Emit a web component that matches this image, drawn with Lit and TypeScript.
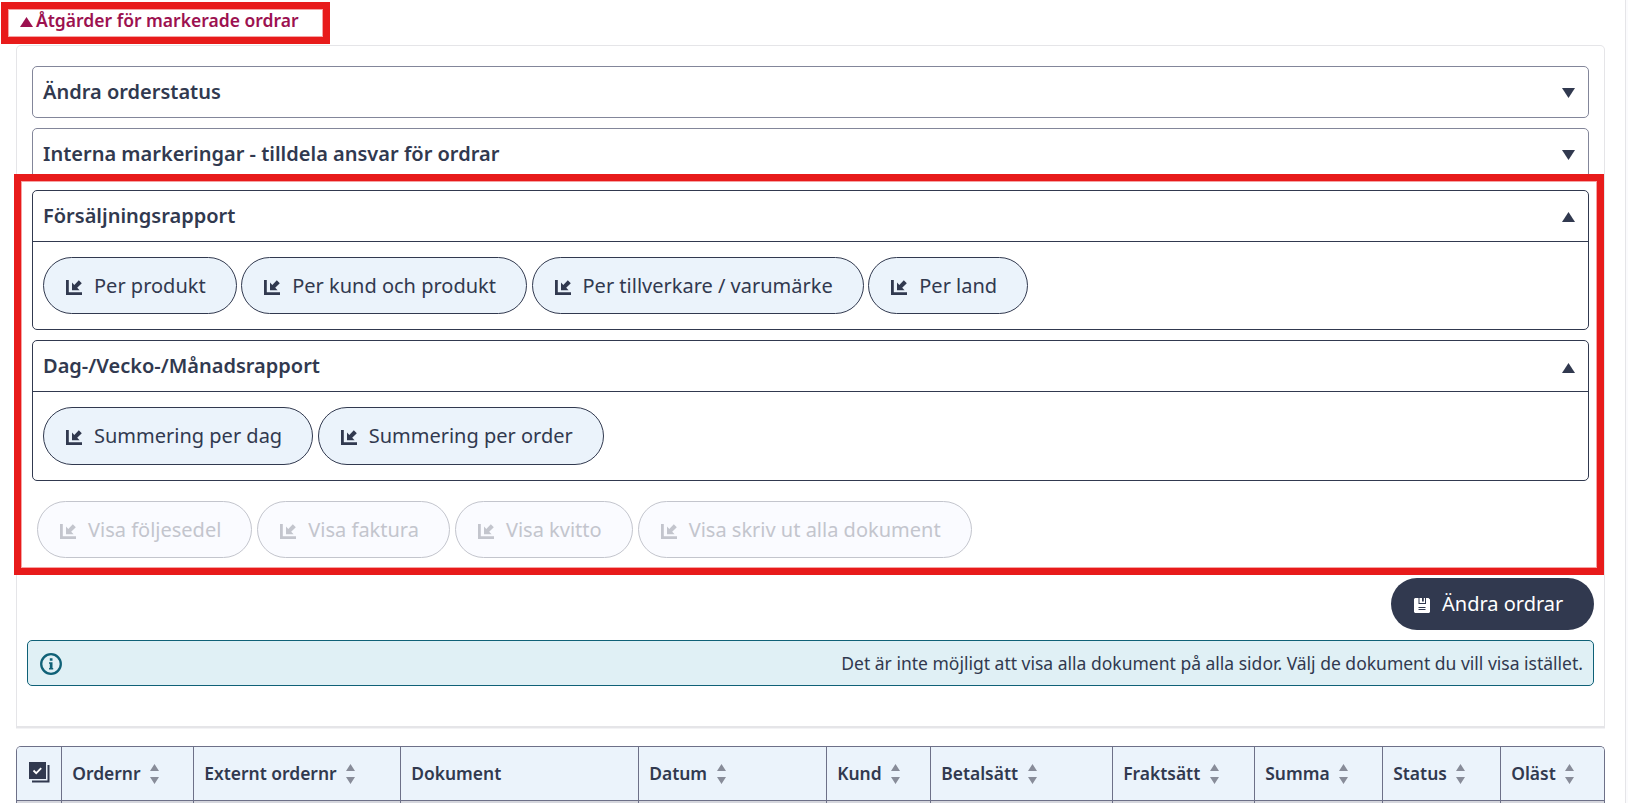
import { LitElement, html, css, svg } from "lit";
import { customElement } from "lit/decorators.js";

const shortcut = svg`<path d="M0 0h2.800v12.200H16V15H0z"/><path d="M6 2.600l2.300 2.300L12.800 .3 15.800 3.200 11.200 7.800 13.600 10.200H6z"/>`;
const linkIcon = html`<svg class="ico" width="16" height="15" viewBox="0 0 16 15" fill="currentColor">${shortcut}</svg>`;
const down = html`<svg class="tri" width="13" height="10" viewBox="0 0 13 10" fill="currentColor"><path d="M0 0h13L6.500 10z"/></svg>`;
const up = html`<svg class="tri" width="13" height="10" viewBox="0 0 13 10" fill="currentColor"><path d="M0 10h13L6.500 0z"/></svg>`;

@customElement("app-root")
export class AppRoot extends LitElement {
  static styles = css`
    :host { display: block; position: relative; height: 803px; overflow: hidden; box-sizing: border-box;
      font-family: "Noto Sans", sans-serif; color: #31394f; background: #fbfbfd; }
    *, *::before, *::after { box-sizing: border-box; }
    svg { display: block; flex: none; }
    .page { width: 1626px; height: 803px; border-right: 1px solid #e5e5e8; padding: 0 20px 0 16px; background: #fff; }
    .toggle { height: 45px; padding: 0 0 6px 4px; display: flex; align-items: center; gap: 3px;
      color: #9c1150; font-weight: 600; font-size: 17.500px; white-space: nowrap; }
    .toggle .tri { margin-top: 4px; }
    .panel { width: 1589px; height: 683px; border: 1px solid #e5e5e8; border-bottom-width: 2px; border-radius: 5px 5px 0 0;
      box-shadow: 0 1px 0 #f3f3f5; padding: 20px 10px 0; display: flex; flex-direction: column; }
    .stack { display: flex; flex-direction: column; gap: 10px; padding: 0 5px; }
    .acc { border: 1px solid #83869a; border-radius: 5px; }
    .acc.open { border-color: #31394f; }
    .head { height: 50px; padding: 0 13px 2px 10px; display: flex; align-items: center; justify-content: space-between;
      font-size: 20px; font-weight: 600; }
    .head .tri { margin-top: 4px; }
    .acc:last-child .tri { margin-top: 6px; }
    .body { border-top: 1px solid #31394f; padding: 15px 10px; height: 88px; }
    .body.tall { height: 89px; }
    .row { display: flex; gap: 4.500px; }
    .btn { height: 57px; border: 1px solid #31394f; border-radius: 29px; background: #ebf3fb; padding: 0 30px 0 22px;
      display: flex; align-items: center; gap: 12px; font-size: 20px; white-space: nowrap; }
    .tall .btn { height: 58px; padding-bottom: 1px; }
    .ico { margin-top: 4px; }
    .off { padding: 20px 0 0 10px; gap: 5px; }
    .off .btn { color: #c3c5cd; border-color: #c3c5cd; background: #fafbff; }
    .save { align-self: flex-end; margin-top: 20px; height: 52px; width: 203px; border-radius: 26px; background: #31394f; color: #fff;
      display: flex; align-items: center; padding: 0 0 2px 23px; gap: 12px; font-size: 20px; white-space: nowrap; }
    .save .ico { margin-top: 5px; }
    .info { margin-top: 10px; height: 46px; border: 1px solid #0f6177; border-radius: 5px; background: #e0f0f5;
      display: flex; align-items: center; justify-content: space-between; padding: 0 10px 1px 12px; font-size: 17.500px; }
    .info svg { margin-top: 3px; }
    .thead { margin-top: 18px; width: 1589px; height: 57px; border: 1px solid #6d7088; border-bottom: 0; border-radius: 5px 5px 0 0;
      display: grid; grid-template-columns: 44px 132px 207px 238px 188px 104px 182px 142px 128px 118px 104px;
      grid-template-rows: 54px 3px; overflow: hidden; }
    .th { background: #ebf3fb; border-left: 1px solid #6d7088; border-bottom: 1px solid #6d7088; display: flex; align-items: center;
      padding: 0 0 1px 10.200px; gap: 9.500px; font-size: 17.450px; font-weight: 600; height: 54px; white-space: nowrap; }
    .th svg { margin-top: 1px; }
    .th:first-child { border-left: 0; padding: 0 0 4px 12px; }
    .td { background: #d5d6dd; border-left: 1px solid #6d7088; }
    .td.first { border-left: 0; }
    .mark { position: absolute; border: 7px solid #e81b1b; box-shadow: inset 0 0 0 1px rgba(232, 27, 27, .4); }
    .m1 { left: 1px; top: 2px; width: 329px; height: 42px; }
    .m2 { left: 14px; top: 174px; width: 1590px; height: 401px; }
  `;

  btn(t: string) { return html`<div class="btn">${linkIcon}<span>${t}</span></div>`; }

  render() {
    const cols = ["Ordernr", "Externt ordernr", "Dokument", "Datum", "Kund", "Betalsätt", "Fraktsätt", "Summa", "Status", "Oläst"];
    const sort = html`<svg width="9" height="20" viewBox="0 0 9 20" fill="#888c99"><path d="M0 7h9L4.500 0zM0 13h9L4.500 20z"/></svg>`;
    return html`
      <div class="page">
        <div class="toggle">${up}<span>Åtgärder för markerade ordrar</span></div>
        <div class="panel">
          <div class="stack">
            <div class="acc"><div class="head"><span>Ändra orderstatus</span>${down}</div></div>
            <div class="acc"><div class="head"><span>Interna markeringar - tilldela ansvar för ordrar</span>${down}</div></div>
            <div class="acc open"><div class="head"><span>Försäljningsrapport</span>${up}</div>
              <div class="body"><div class="row">
                ${["Per produkt", "Per kund och produkt", "Per tillverkare / varumärke", "Per land"].map((t) => this.btn(t))}
              </div></div></div>
            <div class="acc open"><div class="head"><span>Dag-/Vecko-/Månadsrapport</span>${up}</div>
              <div class="body tall"><div class="row">
                ${["Summering per dag", "Summering per order"].map((t) => this.btn(t))}
              </div></div></div>
          </div>
          <div class="row off">
            ${["Visa följesedel", "Visa faktura", "Visa kvitto", "Visa skriv ut alla dokument"].map((t) => this.btn(t))}
          </div>
          <div class="save">
            <svg class="ico" width="16" height="15" viewBox="0 0 16 15"><path fill="#fff" d="M1 0h3.500v6H12V0h2.500L16 1.500V14l-1 1H1l-1-1V1z"/><path fill="#fff" d="M5.500 0H8v3.500h1.800V0H11v5H5.500z"/><path stroke="#31394f" d="M4.500 9.500h7M4.500 11.500h7"/></svg>
            <span>Ändra ordrar</span>
          </div>
          <div class="info">
            <svg width="22" height="22" viewBox="0 0 22 22" fill="none" stroke="#0f6177"><circle cx="11" cy="11" r="9.800" stroke-width="2.300"/><path fill="#0f6177" stroke="none" d="M9.800 5.200h2.700v2.600H9.800zM9 9.200h3.500v5.800h.7v1.600H9V15h.8v-4.200H9z"/></svg>
            <span>Det är inte möjligt att visa alla dokument på alla sidor. Välj de dokument du vill visa istället.</span>
          </div>
        </div>
        <div class="thead">
          <div class="th"><svg width="21" height="21" viewBox="0 0 21 21"><path fill="#31394f" d="M0 0h17v17H0zM18.500 3H20.500v17.500H3v-2h15.500z"/><path d="M4.500 8.500l2.700 2.700 5-5" fill="none" stroke="#fff" stroke-width="1.800"/></svg></div>
          ${cols.map((c) => html`<div class="th"><span>${c}</span>${c === "Dokument" ? "" : sort}</div>`)}
          <div class="td first"></div>${cols.map(() => html`<div class="td"></div>`)}
        </div>
      </div>
      <div class="mark m1"></div>
      <div class="mark m2"></div>`;
  }
}
